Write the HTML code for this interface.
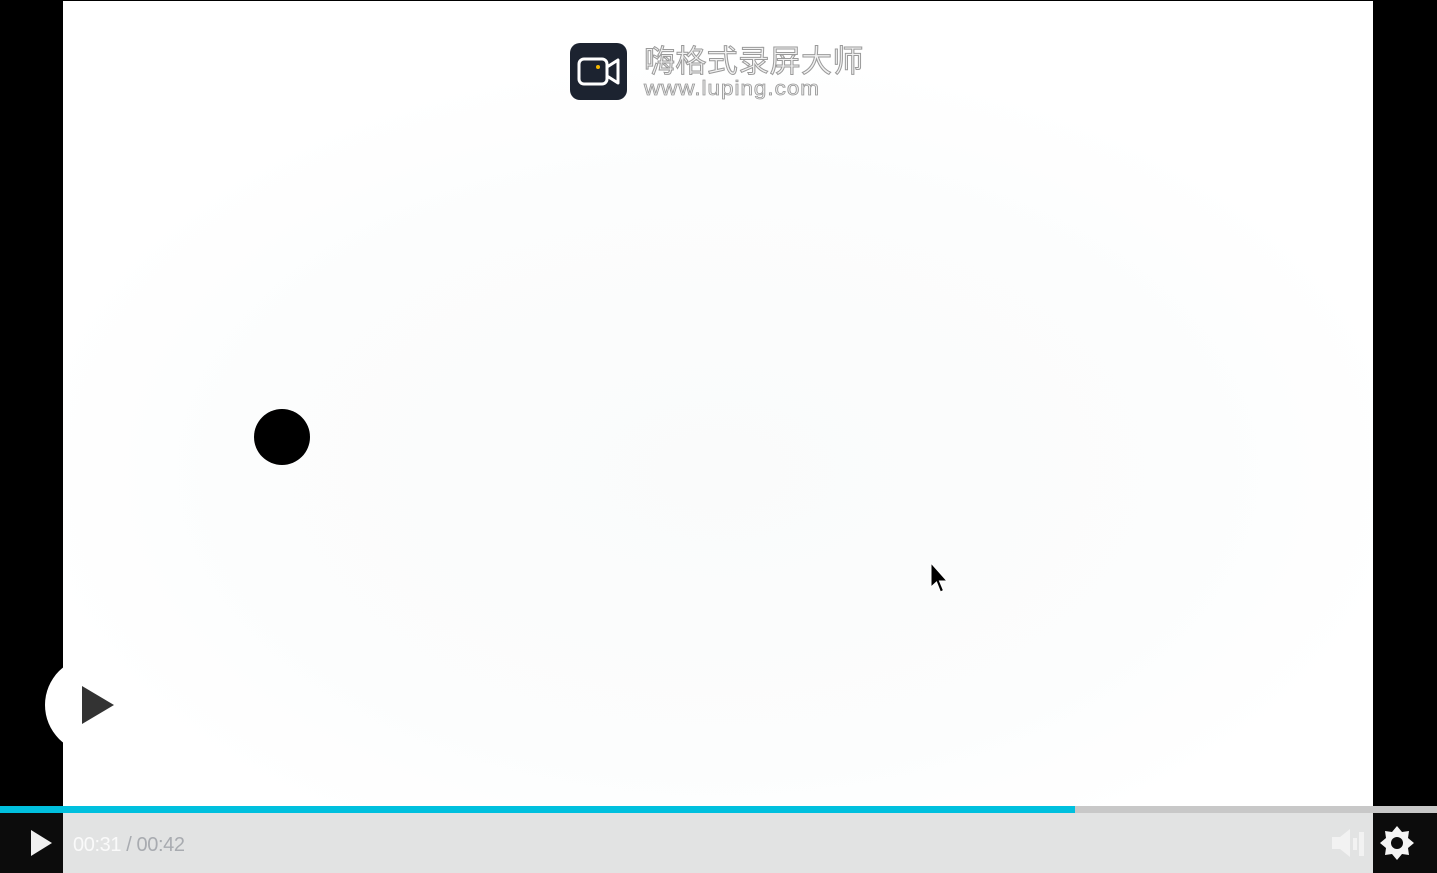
<!DOCTYPE html>
<html><head><meta charset="utf-8"><style>
html,body{margin:0;padding:0;width:1437px;height:873px;overflow:hidden;background:#000;font-family:"Liberation Sans","Noto Sans CJK SC",sans-serif}
.v{position:absolute;left:63px;top:1px;width:1310px;height:872px;background:radial-gradient(ellipse 700px 420px at 655px 470px,#fafbfb 0%,#fcfdfd 70%,#fff 100%)}
.logo{position:absolute;left:570px;top:43px;width:57px;height:57px;border-radius:10px;background:#1c2330}
.t1{position:absolute;left:644px;top:44px;font-size:31px;color:#f2f2f2;letter-spacing:0.4px;-webkit-text-stroke:1px #9a9a9a;line-height:36px}
.t2{position:absolute;left:644px;top:78px;font-size:20px;color:#f2f2f2;letter-spacing:0.9px;-webkit-text-stroke:0.8px #9a9a9a;line-height:22px;transform:scaleX(1.12);transform-origin:left}
.dot{position:absolute;left:254px;top:409px;width:56px;height:56px;border-radius:50%;background:#000}
.big{position:absolute;left:45px;top:657px;width:96px;height:96px;border-radius:50%;background:#fff}
.prog{position:absolute;left:0;top:806px;width:1437px;height:7px;background:#c8c8c8}
.prog i{position:absolute;left:0;top:0;width:1075px;height:7px;background:#00c0de}
.bar{position:absolute;left:0;top:813px;width:1437px;height:60px;background:#0c0c0c}
.bar .mid{position:absolute;left:63px;top:0;width:1310px;height:60px;background:#e2e3e3}
.time{position:absolute;left:73px;top:834px;font-size:20px;color:#a8abb0;letter-spacing:-0.4px}
.time b{font-weight:normal;color:#fafafa}
</style></head><body>
<div class="v">
</div>
<div class="logo"><svg width="57" height="57" viewBox="0 0 57 57"><rect x="9" y="16" width="28" height="25" rx="5" fill="none" stroke="#fff" stroke-width="3"/><path d="M37 24 L48 17 V40 L37 33" fill="none" stroke="#fff" stroke-width="3" stroke-linejoin="round"/><circle cx="28" cy="24" r="2" fill="#f5b800"/></svg></div>
<div class="t1">嗨格式录屏大师</div>
<div class="t2">www.luping.com</div>
<div class="dot"></div>
<svg style="position:absolute;left:929px;top:562px" width="22" height="34" viewBox="0 0 22 34"><path d="M2 1 V25 L7.5 20 L11.5 30 L14.5 28.5 L10.5 19 L18 19 Z" fill="#000" stroke="#fff" stroke-width="1"/></svg>
<div class="big"><svg width="96" height="96"><path d="M37 29 L69 48 L37 67 Z" fill="#333"/></svg></div>
<div class="bar"><div class="mid"></div></div>
<div class="prog"><i></i></div>
<svg style="position:absolute;left:28px;top:828px" width="28" height="32"><path d="M3 2 L24 15 L3 28 Z" fill="#f0f0f0"/></svg>
<div class="time"><b>00:31</b> / 00:42</div>
<svg style="position:absolute;left:1330px;top:826px" width="40" height="36"><path d="M2 11 H10 L20 3 V31 L10 23 H2 Z" fill="#f2f2f2"/><rect x="23" y="12" width="4" height="12" fill="#f2f2f2"/><rect x="29" y="6" width="5" height="24" fill="#f2f2f2"/></svg>
<svg style="position:absolute;left:1378px;top:824px" width="38" height="38" viewBox="0 0 38 38"><path d="M19 2 L24 8 L31 7 L30 14 L36 19 L30 24 L31 31 L24 30 L19 36 L14 30 L7 31 L8 24 L2 19 L8 14 L7 7 L14 8 Z" fill="#f5f5f5"/><circle cx="19" cy="19" r="6" fill="#0c0c0c"/></svg>
</body></html>
